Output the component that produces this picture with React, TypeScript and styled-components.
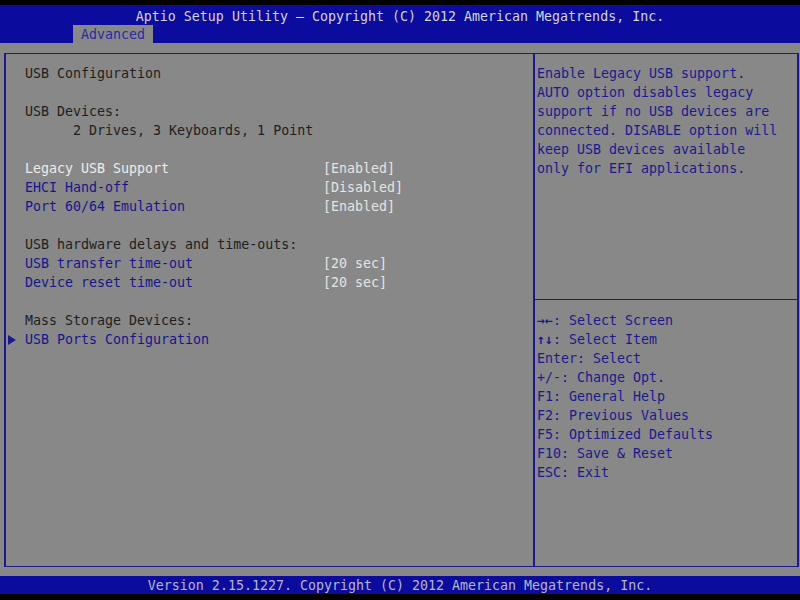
import styled, { createGlobalStyle } from "styled-components"

const GlobalStyle = createGlobalStyle`
    html, body {
        margin: 0;
        padding: 0;
        background: #000;
    }
`

const BLUE = "#0b0b9e"
const GRAY = "#888888"
const INK = "#1a1a8e"

type Row =
    | { kind: "blank" }
    | { kind: "text"; text: string; indent?: boolean }
    | { kind: "option"; label: string; value: string; selected?: boolean }
    | { kind: "submenu"; label: string }

const rows: Row[] = [
    { kind: "text", text: "USB Configuration" },
    { kind: "blank" },
    { kind: "text", text: "USB Devices:" },
    { kind: "text", text: "2 Drives, 3 Keyboards, 1 Point", indent: true },
    { kind: "blank" },
    { kind: "option", label: "Legacy USB Support", value: "[Enabled]", selected: true },
    { kind: "option", label: "EHCI Hand-off", value: "[Disabled]" },
    { kind: "option", label: "Port 60/64 Emulation", value: "[Enabled]" },
    { kind: "blank" },
    { kind: "text", text: "USB hardware delays and time-outs:" },
    { kind: "option", label: "USB transfer time-out", value: "[20 sec]" },
    { kind: "option", label: "Device reset time-out", value: "[20 sec]" },
    { kind: "blank" },
    { kind: "text", text: "Mass Storage Devices:" },
    { kind: "submenu", label: "USB Ports Configuration" },
]

const help = [
    "Enable Legacy USB support.",
    "AUTO option disables legacy",
    "support if no USB devices are",
    "connected. DISABLE option will",
    "keep USB devices available",
    "only for EFI applications.",
]

const keys: [string, string, boolean][] = [
    ["→←", ": Select Screen", true],
    ["↑↓", ": Select Item", true],
    ["Enter", ": Select", false],
    ["+/-", ": Change Opt.", false],
    ["F1", ": General Help", false],
    ["F2", ": Previous Values", false],
    ["F5", ": Optimized Defaults", false],
    ["F10", ": Save & Reset", false],
    ["ESC", ": Exit", false],
]

function App() {
    return (
        <>
            <GlobalStyle />
            <Screen>
                <TopBar>
                    <Title>Aptio Setup Utility – Copyright (C) 2012 American Megatrends, Inc.</Title>
                    <Tabs>
                        <Tab>Advanced</Tab>
                    </Tabs>
                </TopBar>
                <Body>
                    <Frame>
                        <Menu>
                            {rows.map((row, i) => {
                                if (row.kind === "blank") return <MenuRow key={i} />
                                if (row.kind === "text")
                                    return (
                                        <MenuRow key={i}>
                                            <Marker />
                                            <Static $indent={row.indent}>{row.text}</Static>
                                        </MenuRow>
                                    )
                                if (row.kind === "submenu")
                                    return (
                                        <MenuRow key={i}>
                                            <Marker>
                                                <svg width="8" height="10" viewBox="0 0 8 10">
                                                    <path d="M0 0 L8 5 L0 10 Z" fill={INK} />
                                                </svg>
                                            </Marker>
                                            <Label>{row.label}</Label>
                                        </MenuRow>
                                    )
                                return (
                                    <MenuRow key={i}>
                                        <Marker />
                                        <Label $selected={row.selected}>{row.label}</Label>
                                        <Value>{row.value}</Value>
                                    </MenuRow>
                                )
                            })}
                        </Menu>
                        <Side>
                            <Help>
                                {help.map((line, i) => (
                                    <Line key={i}>{line}</Line>
                                ))}
                            </Help>
                            <Keys>
                                {keys.map(([k, rest, bold], i) => (
                                    <Line key={i}>
                                        <KeyName $bold={bold}>{k}</KeyName>
                                        {rest}
                                    </Line>
                                ))}
                            </Keys>
                        </Side>
                    </Frame>
                </Body>
                <Footer>Version 2.15.1227. Copyright (C) 2012 American Megatrends, Inc.</Footer>
            </Screen>
        </>
    )
}

const Screen = styled.div`
    width: 800px;
    height: 600px;
    display: flex;
    flex-direction: column;
    background: #000;
    font-family: "DejaVu Sans Mono", "Liberation Mono", monospace;
    font-size: 13.3px;
    line-height: 19px;
    white-space: pre;
    overflow: hidden;
    padding-top: 5px;
    box-sizing: border-box;
`

const TopBar = styled.div`
    background: ${BLUE};
    height: 38px;
    display: flex;
    flex-direction: column;
`

const Title = styled.div`
    color: #d4d4dc;
    text-align: center;
    padding-top: 2px;
    height: 18px;
    line-height: 19px;
`

const Tabs = styled.div`
    display: flex;
    padding-left: 73px;
    margin-top: auto;
`

const Tab = styled.div`
    background: ${GRAY};
    color: #2a2aa6;
    width: 80px;
    height: 18px;
    line-height: 19px;
    padding-left: 8px;
    box-sizing: border-box;
`

const Body = styled.div`
    background: ${GRAY};
    height: 533px;
    padding: 10px 1px 9px 4px;
    box-sizing: border-box;
    display: flex;
`

const Frame = styled.div`
    flex: 1;
    display: grid;
    grid-template-columns: 527px 1fr;
    border: 1px solid ${INK};
    border-left-width: 2px;
    border-right-width: 2px;
`

const Menu = styled.div`
    padding-top: 10px;
    display: flex;
    flex-direction: column;
`

const MenuRow = styled.div`
    display: grid;
    grid-template-columns: 19px 298px auto;
    height: 19px;
`

const Marker = styled.div`
    display: flex;
    align-items: center;
    padding-left: 2px;
`

const Static = styled.span<{ $indent?: boolean }>`
    color: #1e1e1e;
    grid-column: 2 / 4;
    padding-left: ${(p) => (p.$indent ? "48px" : "0")};
`

const Label = styled.span<{ $selected?: boolean }>`
    color: ${(p) => (p.$selected ? "#ececec" : "#16168c")};
`

const Value = styled.span`
    color: #e4e4e4;
`

const Side = styled.div`
    border-left: 2px solid ${INK};
    display: flex;
    flex-direction: column;
`

const Help = styled.div`
    height: 246px;
    padding: 10px 0 0 2px;
    box-sizing: border-box;
    border-bottom: 1px solid ${INK};
`

const Keys = styled.div`
    padding: 11px 0 0 2px;
`

const Line = styled.div`
    color: ${INK};
    height: 19px;
`

const KeyName = styled.span<{ $bold?: boolean }>`
    font-weight: ${(p) => (p.$bold ? "bold" : "normal")};
`

const Footer = styled.div`
    background: ${BLUE};
    color: #b6b6cc;
    height: 18px;
    line-height: 20px;
    text-align: center;
`

export default App
